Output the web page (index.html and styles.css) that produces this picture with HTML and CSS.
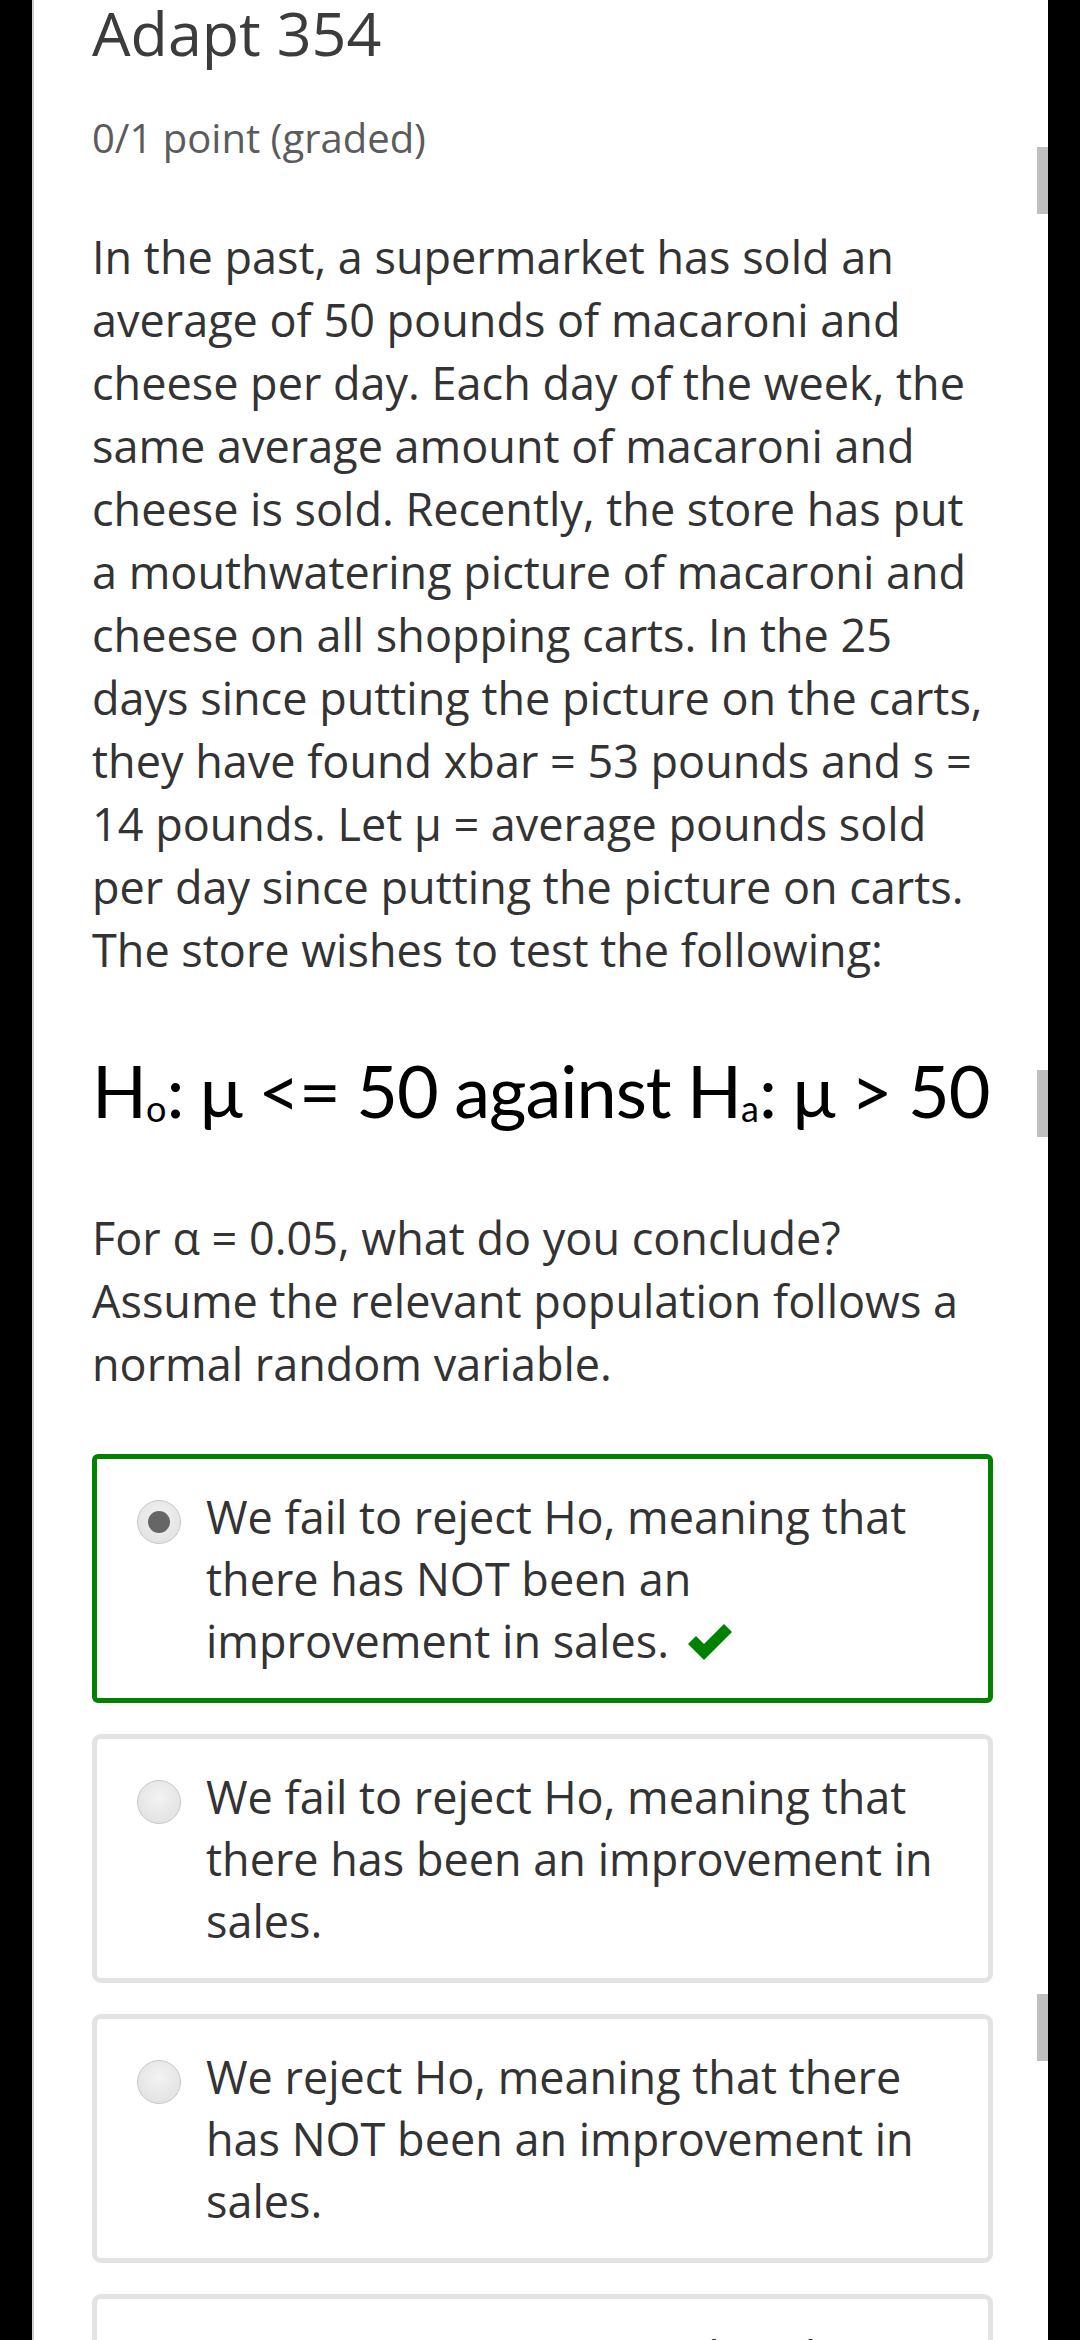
FILE: index.html
```html
<!DOCTYPE html>
<html lang="en">
<head>
<meta charset="utf-8">
<title>Adapt 354</title>
<link rel="stylesheet" href="styles.css">
</head>
<body>
<div class="frame">
  <span class="thumb thumb-1"></span>
  <span class="thumb thumb-2"></span>
  <span class="thumb thumb-3"></span>

  <h3 class="title">Adapt 354</h3>
  <div class="points">0/1 point (graded)</div>

  <p class="body-text">In the past, a supermarket has sold an average of 50 pounds of macaroni and cheese per day. Each day of the week, the same average amount of macaroni and cheese is sold. Recently, the store has put a mouthwatering picture of macaroni and cheese on all shopping carts. In the 25 days since putting the picture on the carts, they have found xbar = 53 pounds and s = 14 pounds. Let μ = average pounds sold per day since putting the picture on carts. The store wishes to test the following:</p>

  <p class="hypothesis">H<sub>o</sub>: μ &lt;= 50 against H<sub>a</sub>: μ &gt; 50</p>

  <p class="body-text question">For α = 0.05, what do you conclude? Assume the relevant population follows a normal random variable.</p>

  <div class="choices">
    <label class="choice correct">
      <span class="radio checked"></span>
      <span class="choice-text">We fail to reject Ho, meaning that there has NOT been an improvement in sales. <svg class="check" viewBox="0 0 46 38" width="46" height="38"><path d="M1 21 L9 13 L17 21 L37 1 L45 9 L17 37 Z" fill="#008100"/></svg></span>
    </label>
    <label class="choice">
      <span class="radio"></span>
      <span class="choice-text">We fail to reject Ho, meaning that there has been an improvement in sales.</span>
    </label>
    <label class="choice">
      <span class="radio"></span>
      <span class="choice-text">We reject Ho, meaning that there has NOT been an improvement in sales.</span>
    </label>
    <label class="choice">
      <span class="radio"></span>
      <span class="choice-text">We reject Ho, meaning that there has been an improvement in sales.</span>
    </label>
  </div>
</div>
</body>
</html>
```

FILE: styles.css
```css
html, body {
  margin: 0;
  padding: 0;
}

body {
  background: #000;
  height: 2340px;
  overflow: hidden;
  font-family: "Open Sans", "Noto Sans", sans-serif;
  color: #333;
}

.frame {
  position: relative;
  box-sizing: border-box;
  margin-left: 32px;
  width: 1016px;
  min-height: 2340px;
  background: #fff;
  border-left: 2px solid #cfcfcf;
  padding: 1px 55px 0 58px;
}

.thumb {
  position: absolute;
  right: 0;
  width: 11px;
  height: 67px;
  background: #bfbfbf;
}
.thumb-1 { top: 147px; }
.thumb-2 { top: 1070px; }
.thumb-3 { top: 1994px; }

.title {
  margin: 0;
  font-size: 61px;
  line-height: 64px;
  font-weight: 400;
  color: #3c3c3c;
}

.points {
  margin-top: 45px;
  font-size: 40px;
  line-height: 56px;
  color: #5b5b5b;
}

.body-text {
  margin: 59px 0 0;
  font-size: 45px;
  line-height: 63px;
  color: #333;
}

.hypothesis {
  margin: 59px 0 0;
  font-family: Lato, "Open Sans", sans-serif;
  font-size: 72px;
  line-height: 100px;
  letter-spacing: -1px;
  word-spacing: -1px;
  color: #000;
  white-space: nowrap;
}

.hypothesis sub {
  font-size: 0.5em;
  vertical-align: -0.12em;
  line-height: 0;
  letter-spacing: 0;
}

.question {
  margin-top: 66px;
}

.choices {
  margin-top: 59px;
  display: flex;
  flex-direction: column;
  gap: 31px;
}

.choice {
  display: flex;
  align-items: flex-start;
  gap: 25px;
  box-sizing: border-box;
  min-height: 249px;
  padding: 27px 40px 24px 40px;
  border: 5px solid #e3e3e3;
  border-radius: 9px;
  background: #fff;
}

.choice.correct {
  border-color: #008100;
  border-radius: 6px;
}

.radio {
  flex: none;
  box-sizing: border-box;
  width: 44px;
  height: 44px;
  margin-top: 14px;
  border-radius: 50%;
  border: 1.5px solid #c9c9c9;
  background: radial-gradient(circle at 50% 40%, #f3f3f3 0%, #e6e6e6 60%, #dedede 100%);
  display: flex;
  align-items: center;
  justify-content: center;
}

.radio.checked::after {
  content: "";
  width: 22px;
  height: 22px;
  border-radius: 50%;
  background: #666;
}

.choice-text {
  font-size: 45px;
  line-height: 62px;
  color: #333;
}

.check {
  vertical-align: -3px;
  margin-left: 6px;
}
```
